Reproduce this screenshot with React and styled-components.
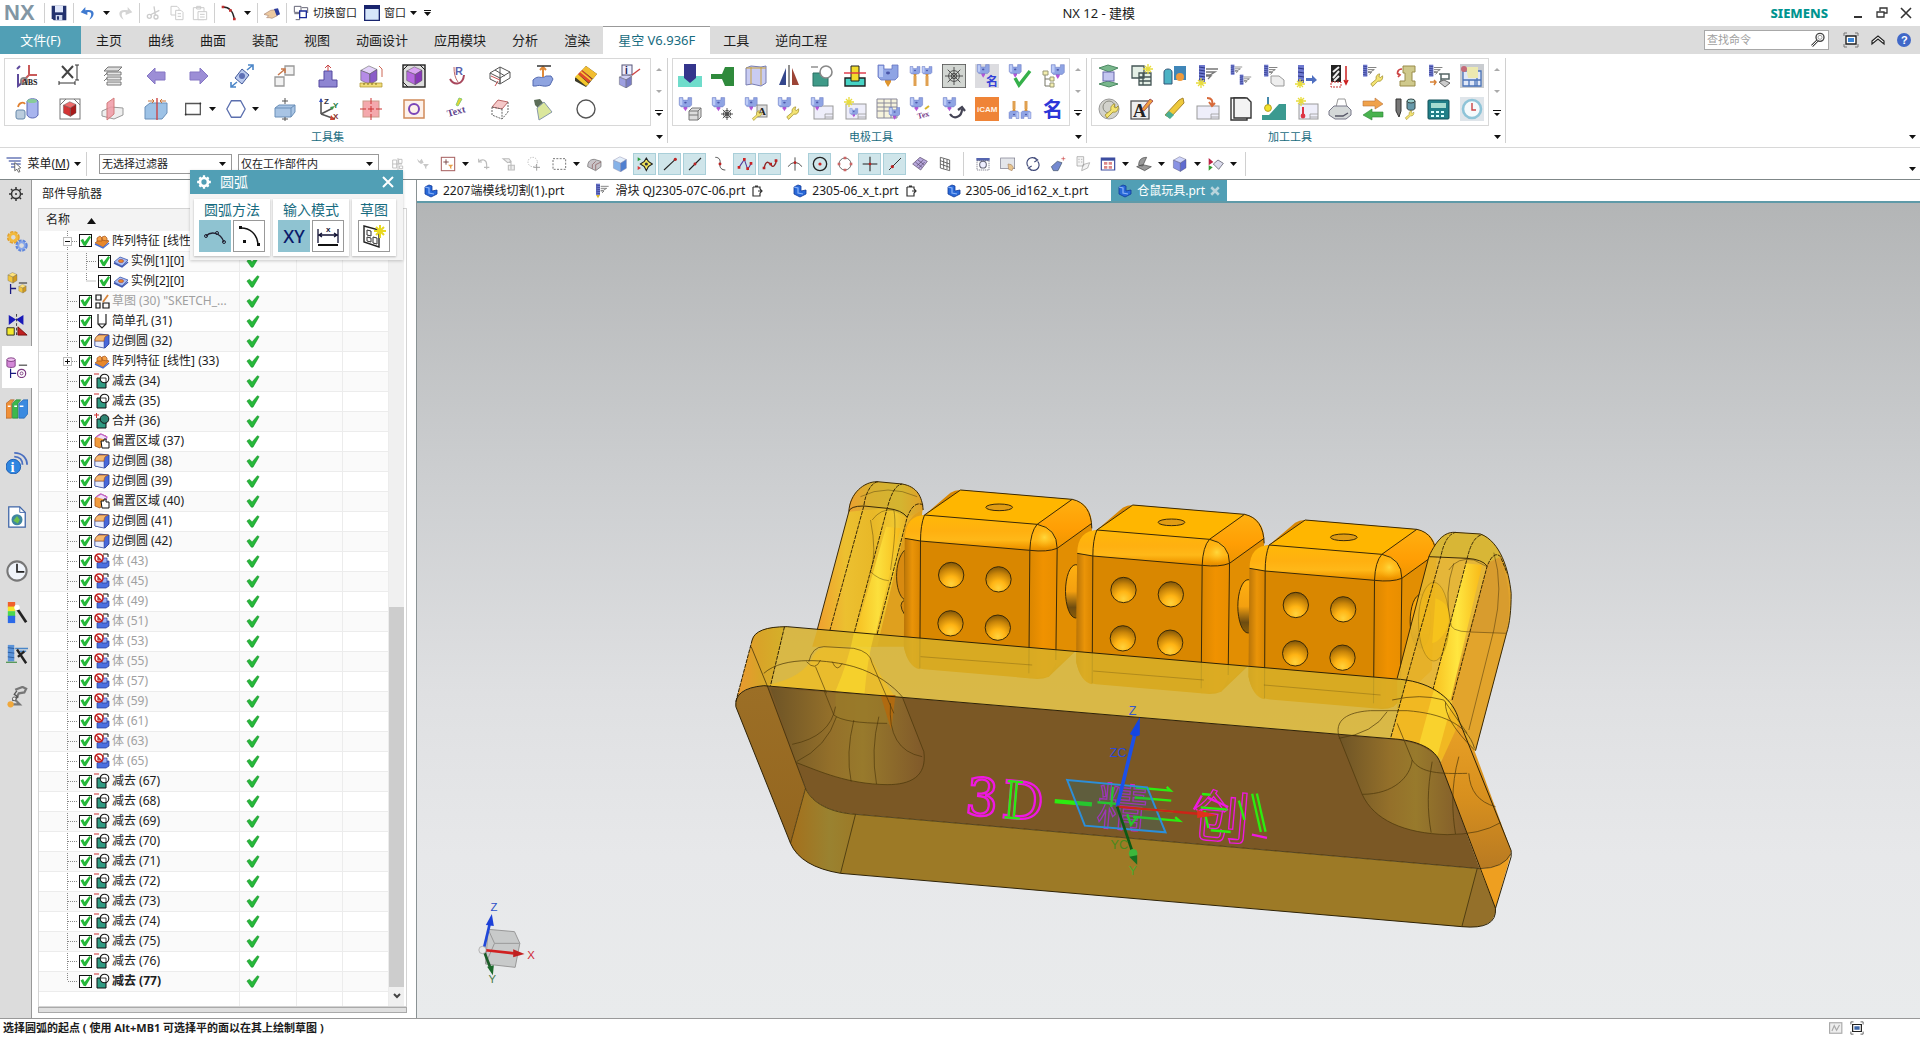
import { useState } from "react";
import styled, { createGlobalStyle } from "styled-components";

//small drawing parts that several icons share
const Svg = ({ size = 24, children, box = 24 }) => (
  <svg width={size} height={size} viewBox={`0 0 ${box} ${box}`} fill="none" aria-hidden="true">
    {children}
  </svg>
);

const Caret = ({ color = "#111" }) => (
  <svg width="7" height="4" viewBox="0 0 7 4" aria-hidden="true">
    <path d="M0 0h7L3.5 4z" fill={color} />
  </svg>
);

const Cube = ({ x = 0, y = 0, s = 1, c = ["#e3d2fa", "#b58be6", "#8a5cc8"], edge = "#555" }) => (
  <g transform={`translate(${x} ${y}) scale(${s})`} stroke={edge} strokeWidth=".6" strokeLinejoin="round">
    <path d="M2 6l9-5 9 4-8 5z" fill={c[0]} />
    <path d="M2 6l10 4v12L2 17z" fill={c[1]} />
    <path d="M12 10l8-5v12l-8 5z" fill={c[2]} />
  </g>
);

const Chuck = ({ x = 0, y = 0, s = 1, tip = "#b455d8" }) => (
  <g transform={`translate(${x} ${y}) scale(${s})`}>
    <path d="M9 13h6v5l-3 5-3-5z" fill={tip} />
    <path d="M2 1h6v4h8V1h6v12l-3 3H5l-3-3z" fill="#8fa4e4" stroke="#6675c0" strokeWidth=".8" />
    <path d="M3 2h4v11H3z" fill="#bccbf6" />
    <ellipse cx="12" cy="9" rx="2" ry="1.4" fill="#4a56a8" />
  </g>
);

const Cutter = ({ x = 0, y = 0, s = 1 }) => (
  <g transform={`translate(${x} ${y}) scale(${s})`}>
    <path d="M3 1h6v17H3z" fill="#6e79cf" />
    <path d="M3 3l6 1M3 6l6 1M3 9l6 1M3 12l6 1M3 15l6 1" stroke="#2c3585" />
    <path d="M10 5h12M10 8h9l-5 3h-4M10 12h5l-3 3" stroke="#777" strokeWidth="1.3" />
  </g>
);

const Wrench = ({ x = 0, y = 0, s = 1 }) => (
  <g transform={`translate(${x} ${y}) scale(${s})`}>
    <path d="M2 12l6-5c-1-4 2-6 4-6l-1 3 2 1 2-2c1 4-2 7-5 6l-6 6z" fill="#f3e372" stroke="#9d8b2a" strokeWidth=".8" />
  </g>
);

const Sheet = ({ x = 3, y = 7, w = 19, h = 14 }) => (
  <g>
    <rect x={x} y={y} width={w} height={h} fill="#eeeefa" stroke="#999" />
    <path d={`M${x + w - 8} ${y + h - 5}h8M${x + w - 8} ${y + h - 5}v5M${x + w - 8} ${y + h - 2}h8`} stroke="#999" strokeWidth=".8" />
  </g>
);

const Spark = ({ x, y }) => (
  <path d={`M${x} ${y - 5}v10M${x - 5} ${y}h10M${x - 3} ${y - 3}l6 6M${x + 3} ${y - 3}l-6 6`} stroke="#e8dc3c" strokeWidth="1.3" />
);

const Web = ({ x = 12, y = 12, r = 8 }) => (
  <g transform={`translate(${x} ${y})`} stroke="#444" strokeWidth=".9">
    <path d={`M0 ${-r}V${r}M${-r} 0H${r}M${-r * 0.7} ${-r * 0.7}L${r * 0.7} ${r * 0.7}M${r * 0.7} ${-r * 0.7}L${-r * 0.7} ${r * 0.7}`} />
    <circle r={r * 0.6} />
    <circle r={r * 0.3} />
  </g>
);

const Letters = ({ x, y, size = 9, fill = "#222", children, tilt = 0, serif }) => (
  <text
    x={x}
    y={y}
    fontSize={size}
    fill={fill}
    fontWeight="700"
    fontFamily={serif ? "Liberation Serif, serif" : "Liberation Sans, Noto Sans CJK SC, sans-serif"}
    transform={`rotate(${tilt} ${x} ${y})`}
  >
    {children}
  </text>
);

const Tick = ({ s = 1, x = 0, y = 0 }) => (
  <path transform={`translate(${x} ${y}) scale(${s})`} d="M1 8l3-2 3 3 6-7 2 1-7 12H6z" fill="#26b83a" stroke="#128a25" strokeWidth=".6" />
);

//ribbon icons
const toolsetIcons = [
  ["绝对坐标", <><path d="M14 1v10h8M14 11l-9 9" stroke="#c95a5a" strokeWidth="2" /><path d="M3 10v12l4-3M2 5l3-3" stroke="#5d4a9c" strokeWidth="2" /><circle cx="9" cy="17" r="3" stroke="#888" strokeWidth="2" /><Letters x={7} y={21} size={8} serif>ABS</Letters></>],
  ["删除尺寸", <><path d="M4 2l11 12M15 2L4 14" stroke="#444" strokeWidth="2" /><path d="M19 1v15M17 1h4M17 16h4M1 19h16M1 17v4M17 17v4" stroke="#333" /></>],
  ["图层", <><path d="M3 7l4-4h14l-4 4zM3 12l4-4M3 17l4-4" stroke="#777" fill="#ddd" /><path d="M6 8h14v3H6zM6 13h14v3H6zM6 18h14v3H6z" fill="#e6e6e6" stroke="#777" /></>],
  ["上一步", <path d="M3 12l8-8v4h10v8H11v4z" fill="#9c8ed6" stroke="#8576c4" />],
  ["下一步", <path d="M21 12l-8-8v4H3v8h10v4z" fill="#9c8ed6" stroke="#8576c4" />],
  ["移动", <><path d="M5 14l7-9 7 6-7 9z" fill="#b9c9ee" stroke="#445a9a" /><circle cx="12" cy="12" r="3" fill="#5d6fb5" /><path d="M17 6l6-5M18 1h5v5M7 18l-6 5M1 18v5h5" stroke="#4c86c8" strokeWidth="1.6" /></>],
  ["复制", <><path d="M12 2h9v9h-9zM2 13h9v9H2z" stroke="#999" fill="#f2f2f2" strokeWidth="1.3" /><path d="M5 11l6-5M8 5l4 0v4" stroke="#c8774a" strokeWidth="1.5" /></>],
  ["顶针", <><path d="M8 7h8v9h5v7H3v-7h5z" fill="#8e85d2" stroke="#54499f" /><path d="M12 7V1M9 4l3-3 3 3" stroke="#c94646" /></>],
  ["测量体", <><Cube x={0} y={1} s={0.9} /><path d="M1 19h22v4H1z" fill="#f0dc7a" stroke="#a98f2a" strokeWidth=".7" /><path d="M5 19v2M9 19v2M13 19v2M17 19v2" stroke="#7c6a1c" /><path d="M20 2l3 3v8" stroke="#c65" /></>],
  ["包容体", <><rect x="1" y="1" width="22" height="22" fill="#ddd" stroke="#222" strokeWidth="1.4" /><Cube x={3} y={2} s={0.85} c={["#d9a3f2", "#b667e0", "#8838b8"]} /><path d="M1 6l5-5M18 1l5 5M1 18l5 5" stroke="#222" /></>],
  ["半径", <><path d="M5 15c4 7 13 6 14-4" stroke="#a8475c" strokeWidth="2" /><path d="M9 3c0 6 1 11 4 15" stroke="#b66" /><Letters x={10} y={11} size={11} fill="#5a62ac">R</Letters></>],
  ["层叠", <><path d="M2 9l10-6 10 5-10 6zM2 9v6l10 5v-6M22 8v6l-10 6M7 6l10 6M12 3v16" stroke="#555" /><path d="M3 12l9 4M7 22l3-5" stroke="#c55" /></>],
  ["拉伸面", <><path d="M2 16c6-6 8 0 13-4h5l2 3-3 6c-6 3-9-1-14 1H2z" fill="#8fa4e0" stroke="#556bb0" /><path d="M12 13V3M9 6l3-3 3 3" stroke="#e08a3a" strokeWidth="2" /><path d="M6 2h14" stroke="#333" strokeWidth="1.5" /></>],
  ["颜色", <><path d="M1 14L12 2l11 8-11 13L1 17z" fill="#3c3b2a" /><path d="M1 13l3-3 11 10-3 2z" fill="#f4c72c" /><path d="M4 10l4-4 10 9-3 4z" fill="#e04a2a" /><path d="M6 8l1-1 11 9-1 1z" fill="#f7d33b" /><path d="M8 6l4-4 11 8-4 5z" fill="#f2bd30" /></>],
  ["体信息", <><Cube x={1} y={9} s={0.68} c={["#cfd0f4", "#9d9fe0", "#797cc4"]} /><rect x="5" y="1" width="10" height="10" fill="#eef" stroke="#557" /><Letters x={8} y={10} size={10} fill="#225">i</Letters><path d="M15 11l8-6" stroke="#c44" strokeWidth="1.4" /></>],
  ["回转", <><path d="M12 4c2-3 9-3 11 0v14c-2 4-9 4-11 0z" fill="#a8b4ee" stroke="#5b68b4" /><ellipse cx="17" cy="4" rx="5" ry="2" fill="#8c9" /><rect x="1" y="13" width="9" height="9" rx="2" fill="#bcd" stroke="#68a" /><path d="M3 10c1-5 6-5 7-3" stroke="#e08030" strokeWidth="1.7" /></>],
  ["红色块", <><rect x="2" y="2" width="20" height="20" stroke="#777" /><path d="M2 8l6-6M16 2l6 6" stroke="#777" /><Cube x={4} y={4} s={0.7} c={["#f06a6a", "#d43434", "#a81a1a"]} /></>],
  ["修剪体", <><path d="M1 14l9-4 12 1v7l-9 4-12-3z" fill="#eee" stroke="#999" /><path d="M6 6l7-5v16l-7 6z" fill="#f09aa6" stroke="#c66" opacity=".85" /></>],
  ["拆分体", <><path d="M1 10l5-4h17v10l-5 6H1z" fill="#9dc2e6" stroke="#6a8fb8" /><path d="M13 1v22" stroke="#c44" strokeWidth="1.4" /><path d="M4 4h6M10 4L8 2M10 4L8 6M22 4h-6M16 4l2-2M16 4l2 2" stroke="#c8743a" /></>],
  ["矩形", <><path d="M4 6h16v12H4z" stroke="#555" strokeWidth="1.4" /><circle cx="4" cy="18" r="1" fill="#333" /><circle cx="20" cy="6" r="1" fill="#333" /></>, true],
  ["多边形", <path d="M7 3h10l5 9-5 9H7l-5-9z" stroke="#5b6fae" strokeWidth="1.4" />, true],
  ["偏置体", <><path d="M2 11l4-3h16v7l-4 5H2z" fill="#a8c4e4" stroke="#6a8fb8" /><path d="M2 11h16v9M18 11l4-3" stroke="#6a8fb8" /><path d="M12 1v6M9 4h6M12 20v4M9 22h6" stroke="#555" /></>],
  ["坐标系", <><path d="M5 17V2M5 17l12-6M5 17l14 5" stroke="#555" strokeWidth="1.6" /><path d="M3 5l2-4 2 4z" fill="#334fc0" /><path d="M14 10l5-1-3 4z" fill="#3a9a4a" /><path d="M15 18l4 5h-5z" fill="#c43" /><Letters x={8} y={7} size={8} fill="#334">Z</Letters><Letters x={17} y={11} size={8} fill="#274">Y</Letters><Letters x={17} y={22} size={8} fill="#833">X</Letters></>],
  ["中心", <><rect x="4" y="4" width="16" height="16" fill="#f4a8ac" stroke="#c98" /><path d="M12 1v22M1 12h22" stroke="#c33" strokeDasharray="6 2" /></>],
  ["圆孔", <><rect x="2" y="3" width="20" height="18" fill="#fdf1ea" stroke="#d08a5a" strokeWidth="1.5" /><circle cx="12" cy="12" r="5" stroke="#7a45b8" strokeWidth="2" /></>],
  ["文本", <><Letters x={3} y={20} size={10} fill="#5e3f8c" tilt={-15} serif>Text</Letters><path d="M11 8l3-7 3 1-4 7z" fill="#e8d42c" stroke="#8c7" /></>],
  ["线框", <><path d="M4 10l6-7 10 2-6 7z" fill="#f5c8c8" stroke="#b66" /><path d="M4 10v8l10 4V12M20 5v10l-6 7M4 10l10 2" stroke="#666" strokeDasharray="2 1" /></>],
  ["灯光", <><path d="M3 3l6-1 4 5-5 5-4-4z" fill="#5c6e58" /><path d="M6 11l7-6 8 10-13 8z" fill="#dbe79c" stroke="#89a" /></>],
  ["圆", <circle cx="12" cy="12" r="9" stroke="#555" strokeWidth="1.4" />],
];

const electrodeIcons = [
  ["电极", <><path d="M0 12h24v11H0z" fill="#6fdccb" /><path d="M6 0h12v14l-6 5-6-5z" fill="#34358c" /></>],
  ["横向电极", <path d="M0 10h11l3-7h9v19h-9l-3-7H0z" fill="#2f8a3c" />],
  ["包裹", <><path d="M2 4l5-2 10 1 5-1v17l-5 3-9-2-6 1z" fill="#c9ccf2" stroke="#777cb0" /><path d="M2 4h20M7 3v17M17 3v18" stroke="#c9a23a" /></>],
  ["镜像", <><path d="M9 4v17H2z" fill="#34468c" /><path d="M15 4v17h7z" fill="#9c4436" /><path d="M12 1v22" stroke="#222" /></>],
  ["求差", <><path d="M3 9h15v13H3z" fill="#3f9a88" stroke="#2b6f62" /><circle cx="16" cy="8" r="6" fill="#fff" stroke="#888" strokeWidth="1.6" /><path d="M1 3h7" stroke="#888" strokeWidth="1.4" /></>],
  ["工件", <><path d="M2 14h20v8H2z" fill="#46d3c4" stroke="#222" strokeWidth="1.4" /><path d="M8 2h8v15H8z" fill="#f2dc2c" stroke="#222" /><path d="M1 9h22" stroke="#d34" strokeWidth="1.4" /></>],
  ["夹具", <Chuck tip="#e0952c" />],
  ["双夹具", <><Chuck x={0} y={2} s={0.5} tip="#e0952c" /><Chuck x={12} y={2} s={0.5} tip="#e0952c" /><path d="M6 12v10M18 12v10" stroke="#e0a050" strokeWidth="3" /></>],
  ["网格", <><rect x="0" y="0" width="24" height="24" fill="#d2d6d2" stroke="#555" strokeWidth="1.6" /><Web r={9} /></>],
  ["命名", <><rect width="24" height="24" fill="#dcdce0" /><Chuck x={1} y={0} s={0.6} /><Letters x={11} y={22} size={12} fill="#3340d8">名</Letters></>],
  ["检查", <><Chuck x={0} y={0} s={0.6} /><path d="M7 14l4 7L22 7" stroke="#35b04a" strokeWidth="3.4" /></>],
  ["结构树", <><Chuck x={9} y={0} s={0.65} /><path d="M4 9v13h6M4 15h6" stroke="#776" /><path d="M2 7h5v4H2zM9 13h4v4H9zM9 19h4v4H9z" fill="#f4efb0" stroke="#997" /></>],
  ["电极图纸", <><Chuck s={0.62} /><path d="M11 14l3-3h9v9l-3 3h-9zM11 14h9v9M20 14l3-3M11 18h9" fill="#ddd" stroke="#777" /></>],
  ["电极网格", <><Chuck s={0.62} /><Web x={16} y={17} r={6} /></>],
  ["电极注释", <><Chuck s={0.6} /><rect x="13" y="8" width="10" height="12" fill="#ddd" stroke="#888" /><Letters x={14} y={18} size={11} serif>A</Letters><Wrench x={7} y={13} s={0.7} /></>],
  ["电极设置", <><Chuck s={0.62} /><Wrench x={8} y={9} s={0.9} /></>],
  ["电极工程图", <><Sheet x={4} y={9} w={19} h={13} /><Chuck s={0.6} /></>],
  ["新建工程图", <><Sheet x={3} y={7} w={20} h={15} /><Chuck x={6} y={11} s={0.4} /><Spark x={6} y={5} /></>],
  ["清单", <><path d="M1 2h20v19H1zM1 6h20M1 10h20M1 14h20M8 2v19M15 2v19" fill="#f6f3dc" stroke="#889" /><Chuck x={12} y={10} s={0.55} /></>],
  ["电极文本", <><Chuck s={0.62} /><Letters x={9} y={22} size={8} fill="#7a3f8c" tilt={-15} serif>Tex</Letters><path d="M16 12l4-3" stroke="#d8b62c" strokeWidth="2" /></>],
  ["旋转", <><Chuck s={0.62} /><path d="M8 17c4 6 12 3 12-5M16 13l4-3 3 4" stroke="#445" strokeWidth="2.2" /></>],
  ["iCAM", <><rect width="24" height="24" fill="#ef8437" /><Letters x={2} y={15} size={8} fill="#fff3e4">iCAM</Letters></>],
  ["组合", <><g transform="rotate(180 12 12)"><Chuck x={0} y={2} s={0.5} tip="#e0952c" /><Chuck x={12} y={2} s={0.5} tip="#e0952c" /><path d="M6 12v8M18 12v8" stroke="#e0a050" strokeWidth="3" /></g></>],
  ["名称", <Letters x={2} y={20} size={20} fill="#2c36d8">名</Letters>],
];

const machiningIcons = [
  ["工序", <><path d="M2 4l9-3 10 3-9 4zM2 20l9-3 10 3-9 3z" fill="#79b78c" stroke="#4d8a64" /><rect x="6" y="8" width="11" height="9" fill="#c4c6f0" stroke="#66a" /></>],
  ["程序组", <><path d="M2 2h12v12H2zM9 9h12v12H9zM9 13h12M9 17h12M13 9v12" fill="#e4efe6" stroke="#455" strokeWidth="1.3" /><Spark x={18} y={5} /></>],
  ["仿真", <><path d="M11 2h12v14H11z" fill="#3f86b8" /><path d="M1 8c0-4 8-4 8 0v12H1z" fill="#4cb2c4" stroke="#357" /><circle cx="17" cy="13" r="4" fill="#f09a3c" /></>],
  ["刀具", <><Cutter /><Spark x={5} y={19} /></>],
  ["刀具移动", <><Cutter s={0.6} /><Cutter x={9} y={10} s={0.6} /></>],
  ["刀具复制", <><Cutter s={0.7} /><path d="M9 12h8l5 4v6h-9l-4-3z" fill="#eee" stroke="#999" /></>],
  ["刀具导出", <><path d="M3 1h6v18H3z" fill="#6e79cf" /><path d="M3 4l6 1M3 8l6 1M3 12l6 1M3 16l6 1" stroke="#2c3585" /><path d="M11 14h6v-3l5 5-5 4v-3h-6z" fill="#4f6fc0" /><Spark x={5} y={20} /></>],
  ["区域", <><path d="M3 1h10v17H3z" fill="#222" /><path d="M5 8l6-5M5 14l6-7M6 17l5-5" stroke="#eee" strokeWidth="2" /><path d="M3 18h10v5H3z" fill="#fff" stroke="#c33" strokeDasharray="2 1" /><path d="M18 2v18M16 16l2 4 2-4" stroke="#c22" strokeWidth="1.5" /></>],
  ["刀具设置", <><Cutter s={0.7} /><Wrench x={8} y={9} s={0.9} /></>],
  ["机床", <><path d="M9 2h12v6h-3v9h3v5H6v-5h5V9H9z" fill="#cfc98c" stroke="#998c4a" /><path d="M8 5C3 5 2 11 6 11M4 13l2-2-3-2" stroke="#c44" strokeWidth="1.7" /></>],
  ["刀库", <><Cutter s={0.7} /><path d="M3 18h6M7 16l2 2-2 3" stroke="#d8843a" strokeWidth="1.5" /><path d="M14 10v8M12 10h10v5h-8" stroke="#566" strokeWidth="1.5" /><path d="M12 18l5-2 6 3-5 4z" fill="#ccc" stroke="#666" /></>],
  ["加工设置", <><rect width="24" height="24" fill="#c9ccd0" /><path d="M3 7h18v15H3zM3 16h18M9 16v6M15 16v6M17 7v15" fill="#e0e8f8" stroke="#4a73b8" strokeWidth="1.3" /><path d="M6 3h12v11H8z" fill="#ece9b0" /><circle cx="4" cy="5" r="3" fill="#c46a78" /></>],
  ["全局", <><circle cx="12" cy="12" r="10" fill="#d2d2cc" stroke="#999" /><circle cx="12" cy="10" r="6" stroke="#8a8a80" /><Wrench x={6} y={6} s={1} /></>],
  ["注释", <><rect x="1" y="4" width="18" height="18" fill="#eee" stroke="#555" strokeWidth="1.3" /><Letters x={3} y={20} size={18} serif>A</Letters><path d="M12 12l8-10 3 2-9 10z" fill="#efa03c" stroke="#a55" /></>],
  ["橡皮", <><path d="M2 18L16 3l4-2 1 5L7 21z" fill="#eec93c" stroke="#a8842a" /><path d="M2 18l4-4 5 4-4 4z" fill="#4cae92" /></>],
  ["导入图纸", <><Sheet x={1} y={9} w={22} h={13} /><path d="M11 1c5 0 6 3 5 7M13 5l3 4 3-3" stroke="#d86a3a" strokeWidth="2" /></>],
  ["图纸页", <><path d="M2 1h14l2 3v19H2z" fill="#fff" stroke="#333" strokeWidth="1.4" /><path d="M5 1h13l4 4v16H5z" fill="#f3f3f3" stroke="#333" strokeWidth="1.4" /></>],
  ["探测", <><path d="M0 23v-5h7l10-11h7v16z" fill="#3b9a90" /><path d="M6 0v9" stroke="#48a" strokeWidth="2" /><circle cx="6" cy="11" r="3.4" fill="#f1e22c" stroke="#b8a020" /></>],
  ["温度图纸", <><Sheet x={4} y={7} w={19} h={15} /><Spark x={6} y={4} /><path d="M8 10v8" stroke="#d34" strokeWidth="2" /><circle cx="8" cy="19" r="2.4" fill="#d34" /></>],
  ["打印", <><path d="M8 10l2-8h7l2 8z" fill="#fff" stroke="#999" /><path d="M1 14l5-5h13l4 4v5l-5 4H7l-6-4z" fill="#d4d8d8" stroke="#778" /><path d="M7 19h8l5-3" stroke="#556" strokeWidth="1.4" /></>],
  ["交换", <><path d="M2 4h12V1l8 6-8 5V9H2z" fill="#f0a24a" stroke="#b8743a" strokeWidth=".6" /><path d="M22 15H11v-3l-9 6 9 5v-3h11z" fill="#48b24e" stroke="#2d8436" strokeWidth=".6" /></>],
  ["刀柄", <><path d="M2 2h5v12l-2 6-3-6z" fill="#777" stroke="#333" /><path d="M13 4v7c0 3 8 3 8 0V4" fill="#69a" stroke="#344" /><ellipse cx="17" cy="4" rx="4" ry="2" fill="#9cc" stroke="#344" /><Wrench x={10} y={13} s={0.65} /></>],
  ["计算器", <><rect x="1" y="3" width="21" height="19" rx="1" fill="#207f88" stroke="#125058" /><path d="M4 6h15v5H4z" fill="#a5dcd0" /><path d="M4 14h3v2H4zM9 14h3v2H9zM14 14h3v2h-3zM4 18h3v2H4zM9 18h3v2H9zM14 18h3v2h-3z" fill="#dff" /></>],
  ["时间", <><rect width="24" height="24" fill="#dfe5ea" /><circle cx="12" cy="12" r="9" fill="#f5fafc" stroke="#8ec4d8" strokeWidth="2.6" /><path d="M12 6v7h4" stroke="#c44" strokeWidth="1.4" /></>],
];

//selection bar icons, "on" marks the pressed snap modes
const selectionIcons = [
  { name: "约束", art: <path d="M4 6h6v12H4zM4 12h14M13 5h5v6h-5zM14 15h5v4h-5zM12 3v18" stroke="#bbb" strokeWidth="1.3" /> },
  { name: "选择过滤", art: <path d="M3 4l4 4 3-4 3 6-4 2-4-3zM12 12h9l-4 4v4l-2-2v-2z" fill="#c8c8c8" /> },
  { name: "点过滤", art: <><rect x="2" y="2" width="20" height="20" fill="#fff" stroke="#a66" strokeWidth="1.6" /><path d="M9 5v8M5 9h8" stroke="#744" strokeWidth="1.4" /><path d="M12 13h8l-3 3v4l-2-2v-2z" fill="#e9a04a" /></>, menu: true },
  { name: "撤消选择", art: <path d="M4 9c5-6 12-3 12 4M4 4v5h5M16 13v7M12 17h8" stroke="#bbb" strokeWidth="1.7" /> },
  { name: "选择面", art: <path d="M3 4h9l3 4-5 2zM15 8v12M11 14h9v7h-9z" stroke="#bbb" strokeWidth="1.6" fill="#eee" /> },
  { name: "选择球", art: <><circle cx="10" cy="9" r="7" stroke="#999" strokeDasharray="2 2" /><path d="M16 12v10M11 17h10" stroke="#999" strokeWidth="1.4" /></> },
  { name: "矩形框选", art: <rect x="3" y="4" width="19" height="16" stroke="#777" strokeWidth="1.5" strokeDasharray="3 2" />, menu: true },
  { name: "着色体", art: <><path d="M1 16c0-8 4-11 10-11l10 3v8l-8 6z" fill="#c8c4c8" stroke="#666" /><path d="M8 19v-6l5-5M13 21v-8l8-4" stroke="#855" /></> },
  { name: "透明体", art: <Cube x={0} y={0} s={1.08} c={["#e4effa", "#85b2e8", "#4f7fd0"]} edge="#88a" /> },
  { name: "捕捉全部", on: true, art: <><path d="M1 2l5 3-5 3z" fill="#2a9a3a" /><path d="M1 15l5 3-5 3z" fill="#d33" /><path d="M14 3l3 5 6 4-6 4-3 6-3-6-6-4 6-4z" stroke="#222" strokeWidth="1.6" fill="#f2e65a" /><circle cx="14" cy="12" r="2.4" fill="#334" /></> },
  { name: "端点", on: true, art: <><path d="M3 21L20 5" stroke="#222" strokeWidth="1.6" /><circle cx="20" cy="5" r="2.4" fill="#b22" /></> },
  { name: "中点", on: true, art: <><path d="M3 21L21 3" stroke="#222" strokeWidth="1.6" /><circle cx="12" cy="12" r="2.2" fill="#b22" /></> },
  { name: "控制点", art: <><path d="M5 2c6 0 8 4 7 10s3 9 8 9" stroke="#444" strokeWidth="1.4" /><circle cx="12" cy="12" r="2.2" fill="#b22" /></> },
  { name: "极点", on: true, art: <><path d="M3 17l8-12 5 15 6-10" stroke="#53379a" strokeWidth="1.6" /><path d="M1 15h4v4H1zM9 3h4v4H9zM14 17h4v4h-4zM19 9h4v4h-4z" fill="#c22" /></> },
  { name: "样条点", on: true, art: <><path d="M3 19C6 4 11 10 14 14s6 0 8-8" stroke="#8c2626" strokeWidth="2" /><path d="M1 16h4v4H1zM11 10h4v4h-4zM19 5h4v4h-4z" fill="#b22" /></> },
  { name: "交点", art: <><path d="M12 2v20M2 16C6 8 18 8 22 16" stroke="#444" strokeWidth="1.4" /><circle cx="12" cy="10" r="2" fill="#b22" /></> },
  { name: "圆心", on: true, art: <><circle cx="12" cy="12" r="10" stroke="#222" strokeWidth="2" /><circle cx="12" cy="12" r="2.4" fill="#c22" /></> },
  { name: "象限点", art: <><circle cx="12" cy="12" r="9" stroke="#555" strokeWidth="1.3" /><path d="M10 1h4v4h-4zM10 19h4v4h-4zM1 10h4v4H1zM19 10h4v4h-4z" fill="#c66" /></> },
  { name: "现有点", on: true, art: <><path d="M12 1v22M1 12h22" stroke="#222" strokeWidth="1.6" /><circle cx="12" cy="12" r="2" fill="#b22" /></> },
  { name: "曲线上的点", on: true, art: <><path d="M3 21L21 3" stroke="#333" strokeWidth="1.5" /><circle cx="8" cy="16" r="2.4" fill="#b22" /></> },
  { name: "面上的点", art: <><path d="M1 12L12 2l11 6-10 13z" fill="#b7a8dc" stroke="#546" /><path d="M5 9l10 8M9 6l9 7M7 15L17 6M10 18l9-9" stroke="#546" /></> },
  { name: "栅格", art: <path d="M5 2l14 4v16L5 18zM5 7l14 5M5 12l14 5M10 4v15M15 5v15" stroke="#555" strokeWidth="1.3" /> },
];

const viewIcons = [
  { name: "适合窗口", art: <><path d="M2 3h20v4H2z" fill="#5565b0" /><path d="M3 7h18v14H3z" stroke="#556" strokeDasharray="2 1" /><circle cx="12" cy="13" r="5" stroke="#667" strokeWidth="1.6" fill="#eef" /></> },
  { name: "平移", art: <><rect x="1" y="3" width="21" height="16" fill="#e4e6ea" stroke="#778" /><path d="M12 12l5 1 3 4-2 5-5-2z" fill="#e8c48c" stroke="#a86" /></> },
  { name: "旋转视图", art: <path d="M5 16A8 8 0 0 1 17 5M19 8a8 8 0 0 1-12 11M14 2l5 4-5 3M10 22l-5-4 5-3" stroke="#3c4677" strokeWidth="1.7" /> },
  { name: "缩放", art: <><path d="M2 16l9-8 7 2-6 12H5z" fill="#7489d0" stroke="#456" /><path d="M20 1v6M17 4h6" stroke="#c44" /></> },
  { name: "显示隐藏", art: <path d="M3 1h10v14H3zM12 13l10-3-3 8-9 4zM5 5h2M9 5h2M5 9h2M9 9h2" stroke="#999" fill="#f4f4f4" /> },
  { name: "窗口布局", art: <><path d="M2 3h20v18H2z" fill="#fff" stroke="#3c4da0" strokeWidth="1.8" /><path d="M2 3h20v4H2z" fill="#3c4da0" /><path d="M6 9h5v4H6zM13 9h5v4h-5zM6 15h5v4H6zM13 15h5v4h-5z" fill="#d88" /></>, menu: true },
  { name: "渲染样式", art: <><path d="M4 14C4 6 8 2 16 2L10 15zM1 16l9-3 13 3-10 6z" fill="#999" stroke="#444" /></>, menu: true },
  { name: "视图方向", art: <Cube x={0} y={0} s={1.05} c={["#cfd4fa", "#8892e4", "#5f6bd0"]} edge="#557" />, menu: true },
  { name: "剪切截面", art: <><path d="M1 3l7 6-7 5z" fill="#b24" /><path d="M1 14l6 3-6 5z" fill="#393" /><path d="M8 12l7-6 8 5-7 9z" fill="#dde" stroke="#445" /></>, menu: true },
];

//tree icons, 16 unit box
const treeArt = {
  pattern: <><path d="M1 10l6-5 8 3-6 6z" fill="#e8882c" stroke="#a8551a" strokeWidth=".7" /><path d="M3 8V5l3-2 2 2v3zM8 7V4l3-1 2 2v3z" fill="#f3a14a" stroke="#a8551a" strokeWidth=".7" /><path d="M1 11l8 4 6-5" stroke="#4a6fd0" strokeWidth="1.4" /></>,
  instance: <><path d="M1 9l6-5 8 3-6 6z" fill="#a9bdf0" stroke="#3f58b0" strokeWidth=".8" /><ellipse cx="8" cy="8" rx="2.6" ry="1.6" fill="#e8882c" stroke="#933" strokeWidth=".5" /><path d="M1 10l8 4 6-5" stroke="#3f58b0" strokeWidth="1.4" /></>,
  sketch: <><path d="M2 2h5v5H2zM2 10h4v5H2zM9 10h6v5H9z" stroke="#111" strokeWidth="1.2" /><path d="M9 9l5-7" stroke="#d8843a" strokeWidth="1.8" /></>,
  hole: <path d="M4 1v10l4 4 4-4V1M4 11h8" stroke="#222" strokeWidth="1.2" />,
  blend: <><path d="M1 6l4-5 10 1v9l-4 4-10-2z" fill="#4a68d8" stroke="#233a92" strokeWidth=".8" /><path d="M1 8h9v7l-9-2z" fill="#e8ebfb" stroke="#233a92" strokeWidth=".5" /><path d="M1 8c0-4 2-5 4-6l9 0c-3 1-4 3-4 6z" fill="#f4b870" stroke="#a8551a" strokeWidth=".7" /></>,
  subtract: <><path d="M3 5h9v10H3z" fill="#2f9a82" stroke="#111" /><circle cx="10.5" cy="5.5" r="4.3" fill="#fff" stroke="#111" strokeWidth="1.1" /><path d="M7 5h5v5" stroke="#111" strokeWidth=".8" /><path d="M0 1h5" stroke="#c33" /></>,
  unite: <><path d="M3 6h9v9H3z" fill="#2f9a82" stroke="#111" /><circle cx="10.5" cy="6" r="4.3" fill="#2f8472" stroke="#111" /><path d="M0 2h5M2.5 0v5" stroke="#c33" /></>,
  offset: <><path d="M1 5l5-4 6 2v4l-6 8-5-2z" fill="#f09a3c" stroke="#a8551a" strokeWidth=".8" /><path d="M2 4l5-3 6 3-1 3" stroke="#c060d0" strokeWidth="1.2" fill="#f0dcf6" /><path d="M7 8h3V6h2v3h3v6H8z" fill="#fff" stroke="#111" /></>,
  body: <><path d="M3 10l4-2h8v5l-3 2H3z" fill="#4a6fe0" stroke="#233a92" strokeWidth=".7" /><path d="M8 5h5v5H8z" fill="#9ab0f4" stroke="#233a92" strokeWidth=".7" /><path d="M9 1h5v3M8 3h2" stroke="#111" /><circle cx="5" cy="5" r="4" fill="#fff" stroke="#c02020" strokeWidth="1.6" /><path d="M2 2l6 6M4 3v4h3" stroke="#c02020" strokeWidth="1.2" /></>,
};

const row = (kind, label, rest) => ({ kind, label, ...rest });
const treeRows = [
  row("pattern", "阵列特征 [线性]", { toggle: "-" }),
  row("instance", "实例[1][0]", { child: true }),
  row("instance", "实例[2][0]", { child: true, lastChild: true }),
  row("sketch", '草图 (30) "SKETCH_...', { dim: true }),
  row("hole", "简单孔 (31)"),
  row("blend", "边倒圆 (32)"),
  row("pattern", "阵列特征 [线性] (33)", { toggle: "+" }),
  row("subtract", "减去 (34)"),
  row("subtract", "减去 (35)"),
  row("unite", "合并 (36)"),
  row("offset", "偏置区域 (37)"),
  row("blend", "边倒圆 (38)"),
  row("blend", "边倒圆 (39)"),
  row("offset", "偏置区域 (40)"),
  row("blend", "边倒圆 (41)"),
  row("blend", "边倒圆 (42)"),
  ...[43, 45, 49, 51, 53, 55, 57, 59, 61, 63, 65].map((n) => row("body", `体 (${n})`, { dim: true })),
  ...[67, 68, 69, 70, 71, 72, 73, 74, 75, 76].map((n) => row("subtract", `减去 (${n})`)),
  row("subtract", "减去 (77)", { bold: true, last: true }),
];

const TreeLines = ({ item }) => (
  <>
    <svg width="20" height="20" fill="none" aria-hidden="true">
      <path d={item.last ? "M8.5 0v10" : "M8.5 0v20"} stroke="#888" strokeDasharray="1 1" />
      {!item.child && <path d="M9 10.5h9" stroke="#888" strokeDasharray="1 1" />}
      {item.toggle && (
        <>
          <rect x="4.5" y="6.5" width="8" height="8" fill="#fff" stroke="#bbb" />
          <path d={item.toggle === "+" ? "M6 10.5h5M8.5 8v5" : "M6 10.5h5"} stroke="#111" />
        </>
      )}
    </svg>
    {item.child && (
      <svg width="19" height="20" fill="none" aria-hidden="true">
        <path d={item.lastChild ? "M7.5 0v10h9" : "M7.5 0v20M8 10.5h9"} stroke="#888" strokeDasharray="1 1" />
      </svg>
    )}
  </>
);

const railItems = [
  ["装配", true, <><circle cx="8" cy="8" r="5" stroke="#e0a030" strokeWidth="4" strokeDasharray="3 1" /><circle cx="8" cy="8" r="4" stroke="#f2b93c" strokeWidth="3" /><circle cx="17" cy="17" r="5" stroke="#5f86dc" strokeWidth="3.4" strokeDasharray="3 1" /><circle cx="17" cy="17" r="3.6" stroke="#86a6ea" strokeWidth="2" /></>],
  ["装配导航器", false, <><Cube x={1} y={0} s={0.55} c={["#ffe27a", "#f2c53c", "#d09a20"]} /><Cube x={13} y={13} s={0.45} c={["#ffe27a", "#f2c53c", "#d09a20"]} /><path d="M14 12h9" stroke="#111" /><path d="M5 13v11M5 18h6" stroke="#1a1a80" strokeWidth="1.4" /></>],
  ["约束导航器", false, <><path d="M3 1l8 5-8 6zM19 1l-8 5 8 6z" fill="#1a1ab8" /><path d="M11.5 0v24" stroke="#333" strokeDasharray="3 2" /><path d="M1 15h8v8H1z" fill="#f4ea2c" stroke="#222" /><path d="M13 14l10 9H13z" fill="#c02020" stroke="#711" /></>],
  ["部件导航器", false, <><path d="M1 4v7c0 2 9 2 9 0V4" fill="#d488d8" stroke="#7c3a80" /><ellipse cx="5.5" cy="4" rx="4.5" ry="2" fill="#f0c0f0" stroke="#7c3a80" /><path d="M14 10h9" stroke="#111" /><path d="M5 14v11M5 19h6" stroke="#1a1a80" strokeWidth="1.3" /><circle cx="17" cy="19" r="4.5" stroke="#7c3a80" strokeWidth="1.3" /><circle cx="17" cy="19" r="1.6" stroke="#7c3a80" /></>],
  ["重用库", false, <><path d="M0 6l5-4h4l-3 4v16H0z" fill="#f09038" stroke="#a8602a" strokeWidth=".7" /><path d="M7 6l4-4h5l-3 4v16H7z" fill="#3cb84c" stroke="#24803a" strokeWidth=".7" /><path d="M14 6l5-4h5v15l-4 5h-6z" fill="#3a8ae0" stroke="#2360a8" strokeWidth=".7" /><path d="M2 9h3M9 9h3M15 9h4" stroke="#fff" strokeWidth="1.5" /></>],
  ["高清3D工具", true, <><circle cx="8" cy="16" r="8" fill="#2f86e0" stroke="#1a5ab0" /><Letters x={5} y={22} size={16} fill="#fff" serif>i</Letters><path d="M9 5c6 0 9 4 9 9M9 1c9 0 14 6 14 13" stroke="#4a6fc0" strokeWidth="2" /></>],
  ["浏览器", true, <><path d="M3 1h12l6 6v16H3z" fill="#fff" stroke="#3f66a8" strokeWidth="1.4" /><path d="M15 1v6h6" stroke="#3f66a8" /><circle cx="12" cy="15" r="6" fill="#3f86a0" /><path d="M8 16l4-5 3 4-2 4z" fill="#6cc04c" /></>],
  ["历史记录", true, <><circle cx="12" cy="12" r="10.5" fill="#f0f4fa" stroke="#777" strokeWidth="2.2" /><path d="M12 4v9h8" stroke="#222" strokeWidth="1.8" /></>],
  ["可视化", false, <><path d="M2 0h8v6H2z" fill="#f0602c" /><path d="M2 5h8v5H2z" fill="#f2e62c" /><path d="M2 10h8v6H2z" fill="#4cd84c" /><path d="M2 15h8v8H2z" fill="#2c6ae8" /><path d="M12 7l10 15" stroke="#222" strokeWidth="3" /><circle cx="12" cy="6" r="3" fill="#fff" /></>],
  ["加工向导", false, <><path d="M2 1h7v18H2z" fill="#5b93d8" /><path d="M2 4l7 1M2 9l7 1M2 14l7 1" stroke="#2c5a9a" /><path d="M10 5h14M15 8h7" stroke="#4a86c8" strokeWidth="1.6" /><path d="M12 6l10 15M20 8l-7 6" stroke="#222" strokeWidth="2.6" /><path d="M0 20h12" stroke="#5a9a5a" strokeWidth="1.5" /></>],
  ["机器人", false, <><path d="M10 4l8-3 4 2-2 4-6 1-4 7 5 5H5" stroke="#777" strokeWidth="2.4" /><path d="M12 5l-3 4 4 3-6 4" stroke="#555" strokeWidth="1.4" /><circle cx="5" cy="20" r="3.4" fill="#f0a83c" /><circle cx="9" cy="14" r="2" fill="#eee" stroke="#555" /></>],
];

//one die in model units, the three on the toy are copies of it
const Die = ({ dx, dy }) => (
  <g transform={`translate(${dx} ${dy})`}>
    <path d="M553 235C553 190 575 172 612 165L690 98Q705 88 725 90L1055 118Q1112 130 1114 205L1100 540L985 650Q970 657 950 657L610 628Q562 620 550 560Z" fill="#d98700" />
    <path d="M928 250L1010 265V600L985 650L925 655Z" fill="url(#sideEdge)" />
    <path d="M1010 265L1114 190L1095 545L1006 625Z" fill="#e28e02" />
    <path d="M553 235L600 245L598 628Q562 620 550 560Z" fill="url(#leftEdge)" />
    <path d="M553 235C553 190 575 165 615 165L950 193C990 195 1010 220 1010 266Q970 275 928 271L600 243Z" fill="url(#fillet)" />
    <path d="M950 193L1055 118Q1112 130 1114 190L1010 266C1010 220 990 195 950 193Z" fill="url(#filletSide)" />
    <circle cx="972" cy="232" r="34" fill="url(#glow)" />
    <path d="M612 165L720 90L1055 118L950 193Z" fill="#ffb600" />
    <g fill="none" stroke="#3a2a08" strokeWidth="3">
      <path d="M612 165L720 90L1055 118L950 193ZM553 235L600 243L928 271Q980 277 1010 265L1114 190" />
      <path d="M612 165Q600 195 600 243L598 625M950 193Q930 215 928 271L925 640M950 193Q1010 205 1010 265L1006 600M1055 118Q1112 130 1114 205" />
    </g>
    {[[692, 345], [834, 358], [690, 490], [832, 503]].map(([x, y]) => (
      <circle key={`${x}-${y}`} cx={x} cy={y} r="38" fill="url(#pip)" stroke="#3a2a08" strokeWidth="3" />
    ))}
    <ellipse cx="836" cy="142" rx="40" ry="10" fill="#e09c14" stroke="#3a2a08" strokeWidth="3" />
    <ellipse cx="1066" cy="394" rx="31" ry="80" fill="url(#boss)" stroke="#3a2a08" strokeWidth="3" />
  </g>
);

const Gradient = ({ id, stops, down, x2 = 1, y2 = 0 }) => (
  <linearGradient id={id} x1="0" y1="0" x2={down ? 0 : x2} y2={down ? 1 : y2}>
    {stops.map(([at, color]) => (
      <stop key={at} offset={at} stopColor={color} />
    ))}
  </linearGradient>
);

const Model = () => (
  <Scene viewBox="-909 -771 4506 2445" preserveAspectRatio="xMidYMid meet" role="img" aria-label="仓鼠玩具">
    <defs>
      <Gradient id="fillet" down stops={[[0, "#ffb808"], [0.45, "#ffb010"], [0.7, "#ffb818"], [0.9, "#f09800"], [1, "#e08a00"]]} />
      <Gradient id="filletSide" down stops={[[0, "#ffb010"], [0.6, "#ff9e04"], [1, "#ee9400"]]} />
      <Gradient id="sideEdge" stops={[[0, "#da8600"], [0.5, "#f09200"], [1, "#e88e00"]]} />
      <Gradient id="leftEdge" stops={[[0, "#b87408"], [0.5, "#ea9408"], [1, "#d88400"]]} />
      <Gradient id="boss" down stops={[[0, "#ffb010"], [0.5, "#f4a010"], [0.8, "#6e4c10"], [1, "#8a5c08"]]} />
      <Gradient id="post" stops={[[0, "#f09a30"], [0.3, "#ecc030"], [0.55, "#e8b828"], [0.75, "#f0c830"], [1, "#e09a20"]]} />
      <Gradient id="postTop" stops={[[0, "#eca030"], [0.3, "#d8b030"], [0.7, "#d4b430"], [1, "#e0a028"]]} />
      <Gradient id="shine" stops={[[0, "#f8c020"], [0.5, "#ffe640"], [1, "#f8b818"]]} />
      <Gradient id="foot" stops={[[0, "#6e5426"], [0.4, "#94702a"], [0.6, "#987a2c"], [1, "#80592a"]]} />
      <Gradient id="strip" down stops={[[0, "#9c6f26"], [1, "#94661f"]]} />
      <Gradient id="rightStrip" down stops={[[0, "#e8a026"], [0.5, "#d8901e"], [1, "#b87a22"]]} />
      <Gradient id="corner" stops={[[0, "#a4701c"], [0.6, "#9a8230"], [1, "#9c7a27"]]} />
      <Gradient id="endCorner" stops={[[0, "#ec9830"], [0.5, "#d8a428"], [1, "#d4b02a"]]} />
      <radialGradient id="pip" cx=".5" cy=".85" r=".85">
        <stop offset="0" stopColor="#ffd23c" />
        <stop offset=".35" stopColor="#ffb414" />
        <stop offset=".7" stopColor="#c88408" />
        <stop offset="1" stopColor="#7e5408" />
      </radialGradient>
      <radialGradient id="glow">
        <stop offset="0" stopColor="#ffd83c" />
        <stop offset="1" stopColor="#ffb414" stopOpacity="0" />
      </radialGradient>
    </defs>

    {/* left handle */}
    <path d="M540 210L608 130L580 400L555 560L440 560Z" fill="#dfa01e" />
    <path d="M553 270C520 300 520 400 553 420ZM553 420Q530 430 553 465Z" fill="#d88a10" stroke="#4a360a" strokeWidth="3" />
    <path d="M290 510L385 155C388 100 430 65 470 65L545 72C590 80 605 110 608 150Q575 160 555 200L470 560L275 560Z" fill="url(#post)" />
    <path d="M385 150C388 100 430 65 470 65L545 72C590 80 605 110 608 150L560 172L500 145L385 155Z" fill="url(#postTop)" />
    <path d="M497 200L540 205L465 522H405Z" fill="url(#shine)" opacity=".85" />
    <g fill="none" stroke="#3a2a08" strokeWidth="3">
      <path d="M290 510L385 155C388 100 430 65 470 65L545 72C590 80 605 110 608 150M385 155Q388 138 430 138L500 145Q545 150 560 172" />
      <path d="M328 512L430 138C435 95 455 65 475 65M402 515L500 145C512 100 525 75 545 72M470 522L560 172Q580 120 608 135" strokeDasharray="12 3" />
      <path d="M450 180Q470 280 450 335Q475 360 505 362M455 180Q480 145 520 150Q530 200 510 330M420 110Q500 70 590 110" strokeWidth="2" opacity=".6" />
    </g>

    <Die dx={0} dy={0} />
    <Die dx={517} dy={45} />
    <Die dx={1034} dy={90} />

    {/* right handle */}
    <g transform="translate(1200 0)">
      <path d="M830 660L925 290C950 235 975 217 1000 217L1080 222C1140 245 1165 330 1172 400C1172 450 1168 490 1158 520L1065 872L960 895L830 820Z" fill="#e6b42c" opacity=".93" />
      <path d="M1045 515L1100 315Q1125 262 1145 300C1180 380 1175 440 1158 520L1065 872L985 720Z" fill="#e2a42c" />
      <path d="M1100 320Q1120 275 1140 300C1170 370 1170 450 1158 520L1048 516Z" fill="#d89c2e" />
      <path d="M962 230L1000 217L1080 222C1110 230 1130 260 1140 290L1100 310L1040 295L925 290Z" fill="#d8b636" />
      <path d="M1035 310L1085 315L990 720L937 690Z" fill="url(#shine)" />
      <ellipse cx="940" cy="485" rx="46" ry="118" fill="#f0b818" opacity=".7" stroke="#8a6a10" strokeWidth="2" />
      <path d="M945 415Q990 430 988 480Q970 540 935 550Z" fill="#f8c61c" opacity=".8" />
      <g fill="none" stroke="#3a2a08" strokeWidth="3">
        <path d="M925 290C950 235 975 217 1000 217L1080 222C1140 245 1165 330 1172 400C1172 450 1168 490 1158 520L1065 872M925 290L1040 295Q1085 298 1100 318M830 655L925 290" />
        <path d="M858 660L962 285Q975 225 1005 217M937 690L1040 295Q1055 230 1085 224M995 720L1100 318Q1120 270 1140 290L1160 340" strokeDasharray="12 3" />
        <path d="M990 485Q985 515 1050 516L1158 520M1120 278Q1150 380 1120 510L1045 810M1000 310Q970 400 990 485M985 330Q1010 290 1060 300L1100 320" strokeWidth="2" opacity=".7" />
      </g>
    </g>

    {/* translucent rear wall of the base */}
    <path d="M95 540Q105 500 200 500L2040 658C2140 668 2200 720 2215 780L2262 872L2160 910C2130 850 2070 838 2010 836L130 677Q55 680 46 725Z" fill="#d8b028" opacity=".84" />
    <path d="M95 540Q105 500 192 500L150 677H130Q55 680 46 725Z" fill="url(#endCorner)" />
    <path d="M130 676Q230 660 270 605Q285 562 320 560L440 567Q460 620 520 705L500 708Z" fill="#f4be1c" opacity=".6" />
    <path d="M400 520H462Q440 600 432 702L345 694Q385 600 400 520Z" fill="#ffe02c" opacity=".55" />
    <path d="M2058 660C2140 680 2200 720 2215 790L2250 860L2165 905C2130 850 2070 838 2010 836Z" fill="#f8ba20" opacity=".75" />
    <path d="M2140 690L2195 725L2150 890L2095 855Z" fill="#ffe236" opacity=".6" />

    {/* underside and outer walls */}
    <path d="M130 677L2010 836C2090 840 2145 865 2160 910L2278 1226L405 1063C330 1058 275 1030 255 985Z" fill="#7b5825" />
    <path d="M46 740Q40 685 130 677L140 677L255 985L210 1150Z" fill="url(#strip)" />
    <path d="M255 985C275 1030 330 1058 405 1063L2278 1226L2325 1345Q2325 1410 2224 1400L360 1240Q240 1220 210 1150Z" fill="#9d7a26" />
    <path d="M255 985C275 1030 330 1058 405 1063L360 1240Q240 1220 210 1150Z" fill="url(#corner)" />
    <path d="M2270 1226L2278 1226L2325 1345Q2325 1410 2224 1400Z" fill="#94702a" />
    <path d="M2160 910L2215 790L2262 872L2372 1172Q2365 1222 2278 1226Z" fill="url(#rightStrip)" />
    <path d="M2278 1226Q2350 1225 2372 1180L2325 1345Z" fill="#ee9f20" />
    <path d="M150 685L545 712L610 875C620 950 570 974 500 974C380 972 300 935 228 908Z" fill="url(#foot)" />
    <path d="M345 700L520 712L515 800L500 790L345 780Z" fill="#9a7a2a" opacity=".7" />
    <path d="M480 705H525L512 810Z" fill="#b06a10" />
    <path d="M1855 828L2012 838C2090 845 2145 870 2162 915L2240 1124H2180C2050 1120 1960 1080 1925 1003Z" fill="url(#foot)" />

    <g fill="none" stroke="#2e2206" strokeWidth="3">
      <path d="M95 540Q105 500 200 500L2040 658C2140 668 2200 720 2215 780L2372 1172V1190L2325 1345Q2330 1410 2224 1400L360 1240Q240 1220 210 1150L46 740Q40 685 130 677L2010 836C2090 840 2145 865 2160 910L2325 1345" />
      <path d="M46 725L95 540M192 500L150 677M2058 660L2010 836" strokeDasharray="12 3" />
      <path d="M140 677L255 985C275 1030 330 1058 405 1063L2278 1226Q2350 1225 2372 1180M255 985L210 1150M405 1063L360 1240M2270 1226L2224 1400M92 560L140 677" strokeWidth="2" />
    </g>
    <g fill="none" stroke="#4a360a" strokeWidth="2.4">
      <path d="M130 640C190 585 330 600 400 620C470 640 520 680 545 710L610 875C620 950 570 974 500 974C380 972 300 935 228 908" opacity=".9" />
      <path d="M265 605Q275 560 310 560L400 565Q450 575 455 610L520 760M310 690L340 765Q370 790 500 790M348 770Q320 860 228 905M345 740Q330 830 215 853M400 780Q375 880 392 965M475 770Q450 870 468 972M510 730Q500 870 605 890M285 620L318 700M258 605Q285 635 300 600M335 605Q350 640 365 610" opacity=".8" />
      <path d="M600 590L935 615M1118 633L1450 660M1630 675L1980 705" opacity=".35" />
    </g>
    <g transform="translate(1200 0)" fill="none" stroke="#4a360a" strokeWidth="2.4" opacity=".85">
      <path d="M655 828C640 770 700 755 750 752H860C960 760 1040 790 1062 865M655 828L725 1003C760 1080 850 1120 980 1124Q1080 1124 1140 1088" />
      <path d="M725 1003C820 1003 870 950 875 900M830 790L875 900C900 940 960 942 1040 940M935 905C920 990 920 1050 932 1118M1015 890C990 980 995 1060 1005 1122M815 720Q900 700 970 720L1040 820M655 835Q760 820 800 755M1045 940Q1050 1020 1125 1040M975 725Q970 780 1062 870" />
    </g>

    {/* sketch text on the underside */}
    <g fill="none" strokeWidth="7" transform="rotate(5 1190 1040)">
      <g fontFamily="DejaVu Serif, serif" fontSize="155" stroke="#ee18e0">
        <text x="735" y="1102">3</text>
        <text x="845" y="1102">D</text>
      </g>
      <path d="M856 992h46M868 996v100M884 996v100M856 1101h46" stroke="#2cec10" />
      <path d="M1002 1040h112" stroke="#2cec10" strokeWidth="13" />
      <g fontFamily="Noto Sans CJK SC, sans-serif" strokeWidth="4">
        <text x="1130" y="1096" fontSize="150" stroke="#d420d0">精</text>
        <text x="1420" y="1106" fontSize="170" stroke="#ee18e0">创</text>
      </g>
      <path d="M1240 978h105l-12-10M1240 1008h110M1130 1032h66M1240 1040h120M1240 1066h140l-14-10M1172 982v60M1222 1060l14 30 16-26" stroke="#2cec10" />
      <path d="M1440 980h26M1440 1020h80M1452 1030l16 50M1476 1086h60M1590 966l36 112M1604 964l36 112M1552 990l22 56" stroke="#2cec10" />
      <path d="M1440 985l-20 44M1460 990l62 22M1600 1088l46 6" stroke="#ee18e0" />
    </g>
    <path d="M1040 960L1280 982L1335 1117L1093 1097Z" fill="#1e6a78" fillOpacity=".3" stroke="#2c8ed8" strokeWidth="6" />
    <path d="M1190 1040L1245 815" stroke="#1c50e8" strokeWidth="11" />
    <path d="M1258 772L1228 822Q1245 834 1258 825Z" fill="#1446e0" />
    <path d="M1190 1040L1440 1062" stroke="#cc2418" strokeWidth="7" />
    <path d="M1490 1066L1430 1050V1074Z" fill="#e0301c" />
    <path d="M1190 1040L1234 1170" stroke="#0c5a14" strokeWidth="8" />
    <circle cx="1238" cy="1180" r="13" fill="#3cb83c" />
    <path d="M1226 1190L1250 1186V1214Z" fill="#167020" />
    <g fontFamily="Liberation Sans, sans-serif" fontSize="38">
      <text x="1225" y="765" fill="#3a58c8">Z</text>
      <text x="1168" y="892" fill="#2c4ad8">ZC</text>
      <text x="1170" y="1166" fill="#4a8a1c">YC</text>
      <text x="1224" y="1246" fill="#4ca82c">Y</text>
    </g>

    {/* view triad */}
    <g transform="translate(0 440)">
      <path d="M-697 968L-618 975L-602 1010L-616 1082L-705 1072Z" fill="#c8caca" stroke="#999" strokeWidth="3" />
      <path d="M-697 968L-678 1010L-602 1010M-678 1010L-705 1072" fill="none" stroke="#999" strokeWidth="3" />
      <path d="M-711 1030L-692 950" stroke="#2048d8" strokeWidth="8" />
      <path d="M-686 922L-704 955L-680 958Z" fill="#1c40d8" />
      <path d="M-711 1030L-620 1040" stroke="#d02020" strokeWidth="8" />
      <path d="M-588 1042L-622 1028V1052Z" fill="#c02020" />
      <path d="M-711 1030L-690 1085" stroke="#1c5c28" strokeWidth="8" />
      <path d="M-683 1106L-700 1080L-680 1076Z" fill="#1c6a2c" />
      <circle cx="-714" cy="1030" r="11" fill="#e8e8e8" stroke="#999" strokeWidth="2" />
      <g fontFamily="Liberation Sans, sans-serif" fontSize="34">
        <text x="-690" y="912" fill="#2c50c8">Z</text>
        <text x="-580" y="1056" fill="#d02838">X</text>
        <text x="-696" y="1128" fill="#4a7a4a">Y</text>
      </g>
    </g>
  </Scene>
);

const RibbonGroup = ({ label, items, cols, cell }) => (
  <Group>
    <GroupTop>
      <Gallery $cols={cols} $cell={cell}>
        {items.map(([name, art, menu]) => (
          <IconButton key={name} aria-label={name}>
            <Svg size={menu ? 22 : 24}>{art}</Svg>
            {menu && <Caret />}
          </IconButton>
        ))}
      </Gallery>
      <Scroller>
        <PlainButton aria-label="上一行">
          <svg width="6" height="3" aria-hidden="true"><path d="M0 3h6L3 0z" fill="#aaa" /></svg>
        </PlainButton>
        <PlainButton aria-label="下一行">
          <svg width="6" height="3" aria-hidden="true"><path d="M0 0h6L3 3z" fill="#aaa" /></svg>
        </PlainButton>
        <PlainButton aria-label="展开">
          <svg width="8" height="6" aria-hidden="true"><path d="M0 0h8v1H0zM1 3h6L4 6z" fill="#111" /></svg>
        </PlainButton>
      </Scroller>
    </GroupTop>
    <GroupFoot>
      <span>{label}</span>
      <PlainButton aria-label={`${label}选项`}>
        <Caret />
      </PlainButton>
    </GroupFoot>
  </Group>
);

const SnapButtons = ({ items }) =>
  items.map(({ name, art, on, menu }) => (
    <SnapItem key={name}>
      <SnapButton $on={on} aria-label={name}>
        <Svg size={16}>{art}</Svg>
      </SnapButton>
      {menu && (
        <MenuArrow aria-label={`${name}菜单`}>
          <Caret />
        </MenuArrow>
      )}
    </SnapItem>
  ));

const PartIcon = () => (
  <Svg size={14} box={14}>
    <path d="M1 3l4-2 3 1v5l5-1v4l-6 3-6-3z" fill="#2868d8" stroke="#123a98" strokeWidth=".8" />
    <path d="M1 3l4 1v5l5 1" stroke="#8cb4f8" strokeWidth="1.2" />
  </Svg>
);

const fileTabs = [
  { name: "2207端模线切割(1).prt" },
  { name: "滑块 QJ2305-07C-06.prt", cutter: true, pinned: true },
  { name: "2305-06_x_t.prt", pinned: true },
  { name: "2305-06_id162_x_t.prt" },
  { name: "仓鼠玩具.prt", active: true },
];

const ribbonTabs = ["主页", "曲线", "曲面", "装配", "视图", "动画设计", "应用模块", "分析", "渲染", "星空 V6.936F", "工具", "逆向工程"];

const App = () => {
  const [checks, setChecks] = useState({});

  return (
    <Shell>
      <GlobalStyle />
      <TitleBar>
        <Logo>NX</Logo>
        <QuickGroup>
          <PlainButton aria-label="保存"><Svg size={16}><path d="M1 1h22v22H4l-3-3z" fill="#23326e" /><path d="M6 1h12v10H6z" fill="#dfe6fa" /><path d="M7 15h10v8H7z" fill="#cfd8ee" /><path d="M9 17h3v5H9z" fill="#23326e" /></Svg></PlainButton>
        </QuickGroup>
        <QuickGroup>
          <PlainButton aria-label="撤消"><Svg size={16}><path d="M8 3L1 11l10 4v-4c6-2 8 3 3 11 9-5 10-17-6-14z" fill="#3f7ad0" /></Svg></PlainButton>
          <PlainButton aria-label="撤消列表"><Caret /></PlainButton>
          <PlainButton aria-label="重做"><Svg size={16}><path d="M16 3l7 8-10 4v-4c-6-2-8 3-3 11C1 17 0 5 16 8z" fill="#d4d4d4" /></Svg></PlainButton>
        </QuickGroup>
        <QuickGroup>
          <PlainButton aria-label="剪切"><Svg size={16}><path d="M12 2l2 13M20 8L6 15" stroke="#ccc" strokeWidth="2" /><circle cx="5" cy="17" r="3" stroke="#ccc" strokeWidth="2" /><circle cx="15" cy="18" r="3" stroke="#ccc" strokeWidth="2" /></Svg></PlainButton>
          <PlainButton aria-label="复制"><Svg size={16}><path d="M3 2h9l3 3v10H3z" stroke="#ccc" strokeWidth="1.5" fill="#fff" /><path d="M10 8h8l3 3v11H10zM13 13h5M13 17h5" stroke="#ccc" strokeWidth="1.5" fill="#fff" /></Svg></PlainButton>
          <PlainButton aria-label="粘贴"><Svg size={16}><path d="M2 4h16v18H2zM7 2h6v4H7z" stroke="#ccc" strokeWidth="1.5" fill="#fff" /><path d="M9 10h13v12H9zM12 14h7M12 18h7" stroke="#ccc" strokeWidth="1.5" fill="#fff" /></Svg></PlainButton>
        </QuickGroup>
        <QuickGroup>
          <PlainButton aria-label="圆弧"><Svg size={16}><path d="M3 3c9 0 15 6 17 18" stroke="#222" strokeWidth="2" /><path d="M1 1h4v4H1zM12 6h4v4h-4zM18 19h4v4h-4z" fill="#c03030" /></Svg></PlainButton>
          <PlainButton aria-label="曲线列表"><Caret /></PlainButton>
        </QuickGroup>
        <QuickGroup>
          <PlainButton aria-label="触控"><Svg size={16}><path d="M0 14l10-6 7-1 3 9-8 4-4-1H4l3-3z" fill="#ecc9a0" stroke="#a87" /><path d="M15 6l6-1 3 9-5 2z" fill="#2c3c9c" /></Svg></PlainButton>
        </QuickGroup>
        <QuickGroup>
          <TextButton>
            <Svg size={16}><path d="M2 2h10v9H2zM13 4h9v8M2 13h8v9H4" stroke="#667" strokeWidth="1.5" /><path d="M10 9h10v10H10z" fill="#fff" stroke="#1a2a98" strokeWidth="2" /></Svg>
            切换窗口
          </TextButton>
          <TextButton>
            <Svg size={16}><path d="M1 1h22v22H1z" fill="#d6e6fa" stroke="#18246e" strokeWidth="2" /><path d="M1 1h22v5H1z" fill="#18246e" /></Svg>
            窗口
            <Caret />
          </TextButton>
          <PlainButton aria-label="工具条选项">
            <svg width="7" height="6" aria-hidden="true"><path d="M0 0h7v1H0zM0 2h7L3.5 6z" fill="#111" /></svg>
          </PlainButton>
        </QuickGroup>
        <WindowTitle>NX 12 - 建模</WindowTitle>
        <Brand>SIEMENS</Brand>
        <WindowButtons>
          <PlainButton aria-label="最小化"><Svg size={12} box={12}><path d="M2 10h8" stroke="#333" strokeWidth="2" /></Svg></PlainButton>
          <PlainButton aria-label="还原"><Svg size={12} box={12}><path d="M4 4V1h7v5H8M1 5h7v5H1z" stroke="#333" strokeWidth="1.3" /></Svg></PlainButton>
          <PlainButton aria-label="关闭"><Svg size={12} box={12}><path d="M1 1l10 10M11 1L1 11" stroke="#333" strokeWidth="1.6" /></Svg></PlainButton>
        </WindowButtons>
      </TitleBar>

      <TabBar>
        <FileButton>文件(F)</FileButton>
        {ribbonTabs.map((tab) => (
          <RibbonTab key={tab} $active={tab.startsWith("星空")}>{tab}</RibbonTab>
        ))}
        <TabTools>
          <SearchBox>
            <input aria-label="查找命令" placeholder="查找命令" />
            <Svg size={16}><circle cx="15" cy="8" r="6" stroke="#444" strokeWidth="2" /><circle cx="15" cy="8" r="3" stroke="#777" /><path d="M11 13l-8 8" stroke="#444" strokeWidth="4" /><path d="M11 13l-8 8" stroke="#fff" strokeWidth="1.5" /></Svg>
          </SearchBox>
          <PlainButton aria-label="全屏"><Svg size={16} box={16}><path d="M1 4V1h3M12 1h3v3M15 12v3h-3M4 15H1v-3" stroke="#777" /><path d="M3 4h10v8H3z" fill="#fff" stroke="#222" strokeWidth="1.4" /><path d="M5 6h6v4H5z" fill="#3c86d8" /></Svg></PlainButton>
          <PlainButton aria-label="收起功能区"><Svg size={14} box={14}><path d="M1 8l6-5 6 5v3L7 6l-6 5z" fill="#fff" stroke="#222" strokeWidth="1.2" /></Svg></PlainButton>
          <PlainButton aria-label="帮助"><Svg size={14} box={14}><circle cx="7" cy="7" r="7" fill="#4068c8" /><Letters x={4} y={11} size={11} fill="#fff">?</Letters></Svg></PlainButton>
        </TabTools>
      </TabBar>

      <Ribbon>
        <RibbonGroup label="工具集" items={toolsetIcons} cols={15} cell={43} />
        <RibbonGroup label="电极工具" items={electrodeIcons} cols={12} cell={33} />
        <RibbonGroup label="加工工具" items={machiningIcons} cols={12} cell={33} />
        <RibbonEnd aria-label="功能区选项"><Caret /></RibbonEnd>
      </Ribbon>

      <SelectionBar>
        <MenuButton>
          <Svg size={18}><path d="M2 4h20M5 8h16M8 12h13M8 16h6" stroke="#6a7ab8" strokeWidth="2" /><path d="M13 10v11l3-2 2 4 2-1-2-4 3-1z" fill="#fff" stroke="#444" /></Svg>
          <span>菜单(<u>M</u>)</span>
          <Caret />
        </MenuButton>
        <Combo $width={133}>
          <select aria-label="选择过滤器"><option>无选择过滤器</option></select>
          <Caret />
        </Combo>
        <Combo $width={141}>
          <select aria-label="选择范围"><option>仅在工作部件内</option></select>
          <Caret />
        </Combo>
        <SnapRow>
          <SnapButtons items={selectionIcons} />
        </SnapRow>
        <SnapRow>
          <SnapButtons items={viewIcons} />
        </SnapRow>
        <RibbonEnd aria-label="选择条选项"><Caret /></RibbonEnd>
      </SelectionBar>

      <Workspace>
        <Rail>
          <RailGear aria-label="资源条选项">
            <Svg size={14} box={14}><circle cx="7" cy="7" r="4.5" stroke="#333" strokeWidth="1.5" /><path d="M7 0v2M7 12v2M0 7h2M12 7h2M2 2l1.5 1.5M10.5 10.5L12 12M12 2l-1.5 1.5M3.5 10.5L2 12" stroke="#333" strokeWidth="1.5" /><circle cx="7" cy="7" r="1" fill="#333" /></Svg>
          </RailGear>
          {railItems.map(([name, apart, art]) => (
            <RailButton key={name} $apart={apart} $active={name === "部件导航器"} aria-label={name}>
              <Svg size={22}>{art}</Svg>
            </RailButton>
          ))}
        </Rail>

        <Navigator>
          <NavTitle>部件导航器</NavTitle>
          <TreeBox>
            <TreeTable>
              <thead>
                <tr>
                  <th scope="col">名称 <svg width="9" height="6" aria-hidden="true"><path d="M0 6h9L4.5 0z" fill="#111" /></svg></th>
                  <th scope="col" aria-label="最新" />
                  <th scope="col" aria-label="注释" />
                  <th scope="col" aria-label="其他" />
                </tr>
              </thead>
              <tbody>
                {treeRows.map((item) => (
                  <tr key={item.label}>
                    <td>
                      <NodeCell $dim={item.dim} $bold={item.bold}>
                        <TreeLines item={item} />
                        <label>
                          <NodeCheck
                            type="checkbox"
                            checked={checks[item.label] !== false}
                            onChange={(e) => setChecks({ ...checks, [item.label]: e.target.checked })}
                          />
                          <Svg size={16} box={16}>{treeArt[item.kind]}</Svg>
                          {item.label}
                        </label>
                      </NodeCell>
                    </td>
                    <td><CheckCell><Svg size={14} box={16}><Tick /></Svg></CheckCell></td>
                    <td />
                    <td />
                  </tr>
                ))}
                <tr><td /><td /><td /><td /></tr>
              </tbody>
            </TreeTable>
            <Track>
              <Thumb />
              <svg width="8" height="6" fill="none" aria-hidden="true"><path d="M1 1l3 3 3-3" stroke="#444" strokeWidth="2" /></svg>
            </Track>
          </TreeBox>
          <Splitter />
        </Navigator>

        <Stage>
          <FileTabs>
            {fileTabs.map((tab) => (
              <FileTab key={tab.name} $active={tab.active}>
                {tab.cutter ? <Svg size={16}><Cutter /><path d="M3 18h6l-3 5z" fill="#d8b62c" /></Svg> : <PartIcon />}
                {tab.name}
                {tab.pinned && <Svg size={13} box={13}><path d="M3 3h7v2M10 9v3H3V3M5 2h3M8 7h4M10 5l2 2-2 2" stroke="#333" strokeWidth="1.2" /></Svg>}
                {tab.active && <Svg size={10} box={8}><path d="M1 1l6 6M7 1L1 7" stroke="#b8d4dc" strokeWidth="2" /></Svg>}
              </FileTab>
            ))}
          </FileTabs>
          <Viewport>
            <Model />
          </Viewport>
        </Stage>
      </Workspace>

      <StatusBar>
        <span>选择圆弧的起点 ( 使用 Alt+MB1 可选择平的面以在其上绘制草图 )</span>
        <Svg size={14}><rect x="1" y="3" width="21" height="18" fill="#eee" stroke="#aaa" strokeWidth="2" /><path d="M5 17l4-9 4 8 5-9" stroke="#aaa" strokeWidth="2" /></Svg>
        <Svg size={14} box={16}><path d="M1 4V1h3M12 1h3v3M15 12v3h-3M4 15H1v-3" stroke="#555" /><path d="M3 4h10v8H3z" fill="#fff" stroke="#222" strokeWidth="1.4" /><path d="M5 6h6v4H5z" fill="#3c66a8" /></Svg>
      </StatusBar>

      <Dialog role="dialog" aria-label="圆弧">
        <DialogHead>
          <Svg size={16} box={14}><circle cx="7" cy="7" r="3.5" stroke="#fff" strokeWidth="2.4" /><path d="M7 1v2M7 11v2M1 7h2M11 7h2M3 3l1 1M10 10l1 1M11 3l-1 1M4 10l-1 1" stroke="#fff" strokeWidth="2" /></Svg>
          <span>圆弧</span>
          <PlainButton aria-label="关闭圆弧"><Svg size={12} box={12}><path d="M1 1l10 10M11 1L1 11" stroke="#fff" strokeWidth="2" /></Svg></PlainButton>
        </DialogHead>
        <DialogBody>
          <DialogGroup>
            <span>圆弧方法</span>
            <div>
              <ModeButton $on aria-label="三点定圆弧"><Svg size={24}><path d="M3 12C8 7 17 8 21 18" stroke="#223" strokeWidth="1.3" /><circle cx="3" cy="12" r="1.5" stroke="#223" /><circle cx="14" cy="9" r="1.5" stroke="#223" /><circle cx="21" cy="18" r="1.5" stroke="#223" /></Svg></ModeButton>
              <ModeButton aria-label="中心和端点定圆弧"><Svg size={24}><path d="M4 4c9 0 16 6 17 16" stroke="#111" strokeWidth="1.4" /><path d="M2 2h3v3H2zM20 19h3v3h-3zM6 16h3v3H6z" fill="#111" /></Svg></ModeButton>
            </div>
          </DialogGroup>
          <DialogGroup>
            <span>输入模式</span>
            <div>
              <ModeButton $on>XY</ModeButton>
              <ModeButton aria-label="参数模式"><Svg size={24}><path d="M2 5v14M22 5v14M3 11h18M6 9l-3 2 3 2M18 9l3 2-3 2" stroke="#113" strokeWidth="1.3" /><path d="M2 21h20" stroke="#111" strokeWidth="2" /><Letters x={10} y={8} size={8} fill="#113">x</Letters></Svg></ModeButton>
            </div>
          </DialogGroup>
          <DialogGroup $narrow>
            <span>草图</span>
            <div>
              <ModeButton aria-label="草图"><Svg size={24}><path d="M2 2l15 4v17L2 18z" stroke="#222" strokeWidth="1.4" fill="#fff" /><path d="M5 6l4 1v5l-4-1zM5 13l4 1v4l-4-1zM11 13l4 1v6l-4-1z" stroke="#333" /><path d="M18 1v13M12 7h12M14 3l8 8M22 3l-8 8" stroke="#e8d820" strokeWidth="2" /></Svg></ModeButton>
            </div>
          </DialogGroup>
        </DialogBody>
      </Dialog>
    </Shell>
  );
};

export default App;

const GlobalStyle = createGlobalStyle`
  * {
    box-sizing: border-box;
  }
  body {
    margin: 0;
    background: #fff;
    color: #1c1c1c;
    font-family: "Noto Sans", "Noto Sans CJK SC", sans-serif;
    font-size: 12px;
    line-height: 16px;
  }
  button, input, select {
    font: inherit;
    color: inherit;
    margin: 0;
  }
  svg {
    flex: none;
    display: block;
  }
`;

const Shell = styled.div`
  position: relative;
  display: flex;
  flex-direction: column;
  height: 100vh;
  overflow: hidden;
`;

const PlainButton = styled.button`
  display: flex;
  align-items: center;
  justify-content: center;
  padding: 0;
  border: 0;
  background: none;
`;

const TitleBar = styled.header`
  display: flex;
  align-items: center;
  flex: none;
  height: 26px;
  padding-left: 4px;
`;

const Logo = styled.strong`
  width: 40px;
  color: #8296a4;
  font-family: "Liberation Sans", sans-serif;
  font-size: 22px;
  line-height: 24px;
`;

const QuickGroup = styled.div`
  display: flex;
  align-items: center;
  justify-content: center;
  gap: 7px;
  height: 20px;
  padding: 0 6px;
  border-left: 1px solid #d0d0d0;
`;

const TextButton = styled(PlainButton)`
  gap: 4px;
  font-size: 11px;
`;

const WindowTitle = styled.span`
  flex: 1;
  padding-right: 10px;
  font-size: 13px;
  text-align: center;
`;

const Brand = styled.strong`
  color: #009490;
  font-family: "Noto Sans", sans-serif;
  font-size: 13px;
  font-weight: 800;
`;

const WindowButtons = styled.div`
  display: flex;
  gap: 12px;
  padding: 0 8px 0 24px;
`;

const TabBar = styled.nav`
  display: flex;
  align-items: stretch;
  flex: none;
  height: 28px;
  background: #dcdcdc;
  font-size: 13px;
`;

const FileButton = styled(PlainButton)`
  width: 81px;
  margin-right: 2px;
  padding-bottom: 1px;
  background: #519fb5;
  color: #fff;
`;

const RibbonTab = styled(PlainButton)`
  padding: 0 ${({ $active }) => ($active ? 15 : 13)}px 2px;
  border-top: 1px solid ${({ $active }) => ($active ? "#999" : "transparent")};
  background: ${({ $active }) => ($active ? "#fff" : "none")};
  color: ${({ $active }) => ($active ? "#176b80" : "#1c1c1c")};
`;

const TabTools = styled.div`
  display: flex;
  align-items: center;
  gap: 12px;
  margin-left: auto;
  padding-right: 9px;
`;

const SearchBox = styled.div`
  display: flex;
  align-items: center;
  width: 125px;
  height: 20px;
  margin-right: 2px;
  padding: 0 2px;
  border: 1px solid #a8a8a8;
  background: #fff;
  input {
    flex: 1;
    min-width: 0;
    padding: 0;
    border: 0;
    outline: 0;
    font-size: 11px;
  }
  input::placeholder {
    color: #a0a0a0;
  }
`;

const Ribbon = styled.section`
  display: flex;
  flex: none;
  height: 94px;
  padding-top: 4px;
  border-bottom: 1px solid #d8d8d8;
`;

const Group = styled.div`
  height: 85px;
  padding-left: 4px;
  border-right: 1px solid #d0d0d0;
`;

const GroupTop = styled.div`
  display: flex;
`;

const Gallery = styled.div`
  display: grid;
  grid-template-columns: repeat(${({ $cols }) => $cols}, ${({ $cell }) => $cell}px);
  grid-auto-rows: 33px;
  border: 1px solid #d8d8d8;
`;

const IconButton = styled(PlainButton)`
  gap: 5px;
`;

const Scroller = styled.div`
  display: grid;
  grid-template-rows: repeat(3, 22px);
  width: 16px;
`;

const GroupFoot = styled.div`
  display: flex;
  align-items: center;
  height: 22px;
  color: #176b80;
  font-size: 11px;
  span {
    flex: 1;
    text-align: center;
  }
  button {
    width: 16px;
  }
`;

const RibbonEnd = styled(PlainButton)`
  align-self: flex-end;
  width: 16px;
  height: 20px;
  margin-left: auto;
`;

const SelectionBar = styled.section`
  display: flex;
  align-items: center;
  flex: none;
  height: 32px;
  border-bottom: 1px solid #7f8788;
`;

const MenuButton = styled(PlainButton)`
  gap: 4px;
  width: 87px;
  height: 24px;
  margin-right: 12px;
  border-right: 1px solid #d0d0d0;
`;

const Combo = styled.div`
  display: grid;
  align-items: center;
  width: ${({ $width }) => $width}px;
  height: 20px;
  margin-right: 6px;
  border: 1px solid #999;
  select {
    grid-area: 1 / 1;
    height: 18px;
    padding: 0 2px;
    border: 0;
    appearance: none;
    background: #fff;
    font-size: 11px;
  }
  svg {
    grid-area: 1 / 1;
    justify-self: end;
    margin-right: 5px;
    pointer-events: none;
  }
`;

const SnapRow = styled.div`
  display: flex;
  align-items: center;
  height: 24px;
  padding-right: 6px;
  border-right: 1px solid #d0d0d0;
  & + & {
    padding-left: 6px;
  }
`;

const SnapItem = styled.div`
  display: flex;
`;

const SnapButton = styled(PlainButton)`
  width: 23px;
  height: 22px;
  margin: 0 1px;
  border: 1px solid ${({ $on }) => ($on ? "#a9cfd9" : "transparent")};
  background: ${({ $on }) => ($on ? "#cfe5ea" : "none")};
`;

const MenuArrow = styled(PlainButton)`
  width: 11px;
`;

const Workspace = styled.main`
  display: flex;
  flex: 1;
  min-height: 0;
`;

const Rail = styled.nav`
  display: flex;
  flex-direction: column;
  flex: none;
  width: 32px;
  border-right: 1px solid #999;
  background: #dcdcdc;
`;

const RailGear = styled(PlainButton)`
  height: 28px;
`;

const RailButton = styled(PlainButton)`
  height: 42px;
  margin: ${({ $apart }) => ($apart ? 12 : 0)}px -1px 0 2px;
  background: ${({ $active }) => ($active ? "#fff" : "none")};
`;

const Navigator = styled.aside`
  display: flex;
  flex-direction: column;
  flex: none;
  width: 385px;
  padding: 0 9px 5px 6px;
  border-right: 1px solid #8a9294;
`;

const NavTitle = styled.h2`
  height: 28px;
  margin: 0;
  padding: 6px 4px;
  font-size: 12px;
  font-weight: 400;
`;

const TreeBox = styled.div`
  display: flex;
  flex: 1;
  min-height: 0;
  overflow: hidden;
  border: 1px solid #d4d4d4;
`;

const TreeTable = styled.table`
  width: 350px;
  table-layout: fixed;
  border-collapse: collapse;
  align-self: flex-start;
  th {
    height: 22px;
    padding: 0 7px;
    background: #f3f3f3;
    font-weight: 400;
    text-align: left;
  }
  th:first-child {
    width: 200px;
  }
  th:nth-child(2) {
    width: 57px;
  }
  th svg {
    display: inline-block;
    margin-left: 14px;
  }
  td {
    height: 20px;
    padding: 0;
    border-right: 1px solid #ececec;
    border-bottom: 1px solid #ececec;
  }
  tbody tr:nth-child(even) {
    background: #fafafa;
  }
`;

const NodeCell = styled.div`
  display: flex;
  align-items: center;
  height: 19px;
  padding-left: 20px;
  overflow: hidden;
  color: ${({ $dim }) => ($dim ? "#a0a0a0" : "#1c1c1c")};
  font-weight: ${({ $bold }) => ($bold ? 700 : 400)};
  white-space: nowrap;
  label {
    display: flex;
    align-items: center;
    gap: 2px;
  }
`;

const NodeCheck = styled.input`
  display: grid;
  width: 13px;
  height: 13px;
  border: 1px solid #111;
  background: #fff;
  appearance: none;
  &:checked::after {
    content: "";
    background: #26b83a;
    clip-path: polygon(5% 45%, 28% 32%, 42% 58%, 85% 5%, 100% 18%, 52% 98%, 32% 94%);
  }
`;

const CheckCell = styled.div`
  padding-left: 6px;
`;

const Track = styled.div`
  display: flex;
  flex-direction: column;
  align-items: center;
  gap: 6px;
  width: 15px;
  padding-bottom: 7px;
  background: #f0f0f0;
`;

const Thumb = styled.div`
  flex: 1;
  width: 100%;
  margin-top: 398px;
  background: #cdcdcd;
`;

const Splitter = styled.div`
  flex: none;
  height: 6px;
  border: 1px solid #aaa;
  background: #e0e0e0;
`;

const Stage = styled.section`
  display: flex;
  flex-direction: column;
  flex: 1;
  min-width: 0;
`;

const FileTabs = styled.div`
  display: flex;
  flex: none;
  height: 23px;
  border-bottom: 2px solid #5f9aa8;
`;

const FileTab = styled(PlainButton)`
  gap: 5px;
  padding: 0 ${({ $active }) => ($active ? 7 : 23)}px 0 7px;
  background: ${({ $active }) => ($active ? "#519fb5" : "none")};
  color: ${({ $active }) => ($active ? "#fff" : "#1c1c1c")};
`;

const Viewport = styled.div`
  flex: 1;
  min-height: 0;
  background: linear-gradient(#b3b5b6, #cbcdcf 32%, #dfe0e2 60%, #e7e8ea 80%, #e9ebec);
`;

const Scene = styled.svg`
  width: 100%;
  height: 100%;
`;

const StatusBar = styled.footer`
  display: flex;
  align-items: center;
  flex: none;
  gap: 7px;
  height: 19px;
  padding: 0 56px 0 3px;
  border-top: 1px solid #999;
  font-size: 11px;
  font-weight: 700;
  span {
    flex: 1;
  }
`;

const Dialog = styled.section`
  position: absolute;
  top: 170px;
  left: 190px;
  width: 213px;
  background: #f4f4f4;
  box-shadow: 0 1px 3px rgba(0, 0, 0, 0.2);
`;

const DialogHead = styled.header`
  display: flex;
  align-items: center;
  gap: 8px;
  height: 24px;
  padding: 0 9px 0 6px;
  background: #519fb5;
  color: #fff;
  font-size: 14px;
  span {
    flex: 1;
  }
`;

const DialogBody = styled.div`
  display: flex;
  gap: 3px;
  padding: 5px 4px 4px;
`;

const DialogGroup = styled.div`
  display: flex;
  flex-direction: column;
  align-items: center;
  width: ${({ $narrow }) => ($narrow ? 44 : 76)}px;
  padding-bottom: 4px;
  background: #fff;
  box-shadow: 0 1px 2px rgba(0, 0, 0, 0.25);
  color: #176b80;
  font-size: 14px;
  line-height: 21px;
  div {
    display: flex;
    gap: 2px;
  }
`;

const ModeButton = styled(PlainButton)`
  width: 32px;
  height: 32px;
  border: 1px solid ${({ $on }) => ($on ? "#8fc3d1" : "#999")};
  background: ${({ $on }) => ($on ? "#8fc3d1" : "#fff")};
  color: #0a1a6a;
  font-size: 18px;
  font-weight: 500;
`;
